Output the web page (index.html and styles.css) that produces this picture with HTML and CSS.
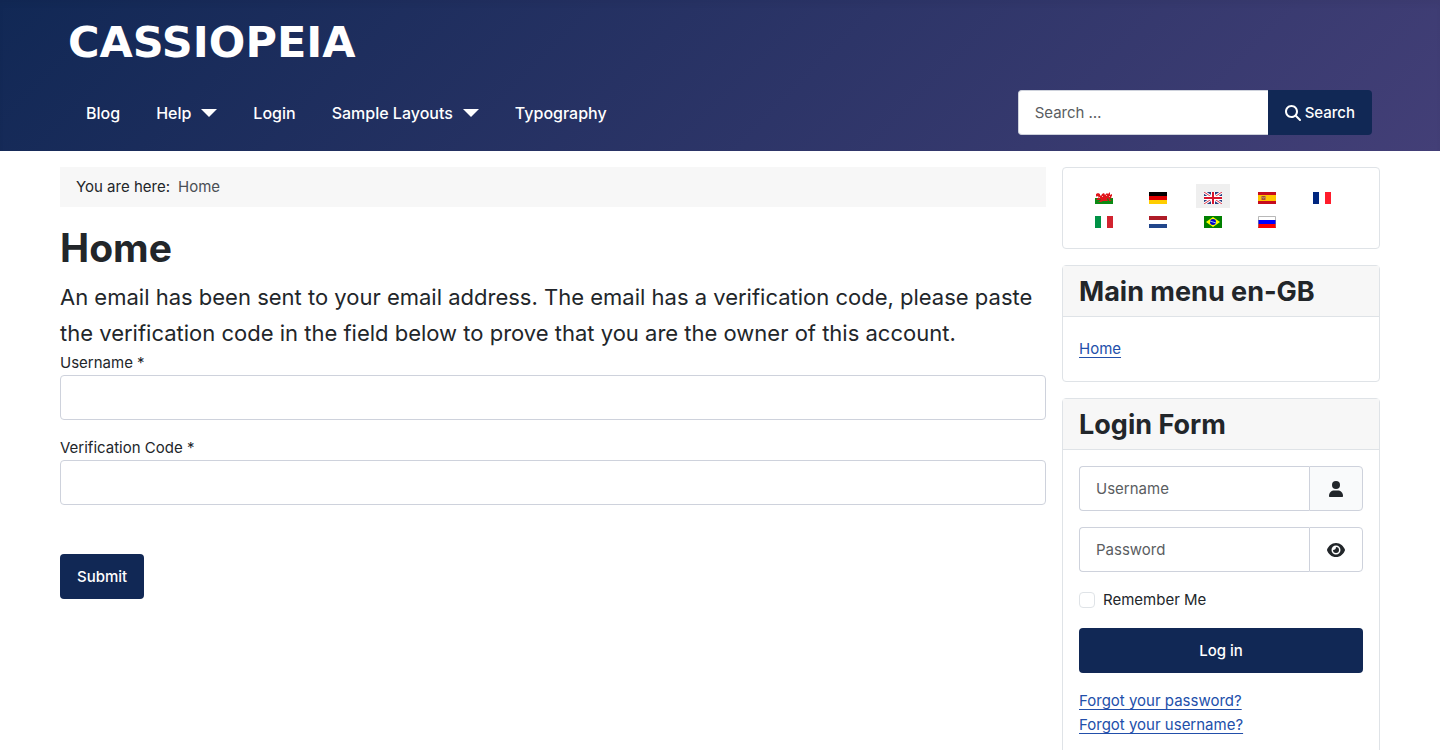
FILE: index.html
```html
<!DOCTYPE html>
<html lang="en-GB">
<head>
<meta charset="utf-8">
<title>Home</title>
<meta name="viewport" content="width=device-width, initial-scale=1">
<link rel="stylesheet" href="styles.css">
</head>
<body>
<header class="header">
  <div class="header-inner">
    <a class="brand" href="#">CASSIOPEIA</a>
    <div class="header-row">
      <nav class="nav" aria-label="Site">
        <a class="nav-link" href="#">Blog</a>
        <a class="nav-link" href="#">Help <svg class="caret" viewBox="0 0 16 8" aria-hidden="true"><path d="M0 0h16L8 8z"/></svg></a>
        <a class="nav-link" href="#">Login</a>
        <a class="nav-link" href="#">Sample Layouts <svg class="caret" viewBox="0 0 16 8" aria-hidden="true"><path d="M0 0h16L8 8z"/></svg></a>
        <a class="nav-link" href="#">Typography</a>
      </nav>
      <form class="search" role="search">
        <input class="input search-input" type="search" placeholder="Search …" aria-label="Search">
        <button class="btn search-btn" type="submit"><svg class="icon" viewBox="0 0 512 512" aria-hidden="true"><path d="M416 208c0 45.900-14.900 88.300-40 122.700l126.600 126.700c12.500 12.500 12.500 32.800 0 45.300s-32.800 12.500-45.300 0L330.700 376c-34.400 25.200-76.800 40-122.700 40C93.100 416 0 322.900 0 208S93.100 0 208 0s208 93.100 208 208zM208 352a144 144 0 1 0 0-288 144 144 0 1 0 0 288z"/></svg>Search</button>
      </form>
    </div>
  </div>
</header>

<div class="page">
  <main class="content">
    <nav class="breadcrumb" aria-label="Breadcrumbs"><span>You are here:</span><span class="crumb">Home</span></nav>
    <h1 class="title">Home</h1>
    <form class="verify">
      <p class="intro">An email has been sent to your email address. The email has a verification code, please paste the verification code in the field below to prove that you are the owner of this account.</p>
      <div class="field">
        <label for="user">Username *</label>
        <input class="input" id="user" type="text">
      </div>
      <div class="field">
        <label for="code">Verification Code *</label>
        <input class="input" id="code" type="text">
      </div>
      <button class="btn submit" type="submit">Submit</button>
    </form>
  </main>

  <aside class="sidebar">
    <section class="card">
      <ul class="flags">
        <li><a class="flag" href="#" aria-label="Cymraeg"><svg viewBox="0 0 18 12"><path fill="#fff" d="M0 0h18v6H0z"/><path fill="#0b8a13" d="M0 6h18v6H0z"/><path fill="#e0151b" d="M1 2l2-1 2 1v1l1 1 1-2 2-1 1 2 2-2 1 1 2-2v3l2-1v2l-1 1 1 2-2-1v2l2 1h-3l-1-3-1 1 1 2H9L8 9l-2 1H3l2-1 1-2-2 1H1l2-2 1-1-2-1-1 1z"/><path fill="#f7b5b5" d="M7 4h1v1H7zM11 3h1v1h-1zM14 4h1v1h-1zM4 5h1v1H4z"/></svg></a></li>
        <li><a class="flag" href="#" aria-label="Deutsch"><svg viewBox="0 0 18 12"><path d="M0 0h18v4H0z"/><path fill="#d00" d="M0 4h18v4H0z"/><path fill="#ffce00" d="M0 8h18v4H0z"/></svg></a></li>
        <li><a class="flag active" href="#" aria-label="English"><svg viewBox="0 0 18 12"><path fill="#243f83" d="M0 0h18v12H0z"/><path stroke="#fff" stroke-width="3" d="M0 0l18 12M18 0L0 12"/><path stroke="#dc3348" d="M0 0l18 12M18 0L0 12"/><path fill="#fff" d="M7 0h4v12H7zM0 4h18v4H0z"/><path fill="#d8142c" d="M8 0h2v12H8zM0 5h18v2H0z"/></svg></a></li>
        <li><a class="flag" href="#" aria-label="Español"><svg viewBox="0 0 18 12"><path fill="#c60b1e" d="M0 0h18v12H0z"/><path fill="#ffc400" d="M0 3h18v6H0z"/><path fill="#c58a3c" d="M3 4h5v4H3z"/><path fill="#b0502a" d="M4 4h3v1H4zM4 6h3v2H4z"/><path fill="#8e7b7b" d="M5 5h1v2H5z"/></svg></a></li>
        <li><a class="flag" href="#" aria-label="Français"><svg viewBox="0 0 18 12"><path fill="#00267f" d="M0 0h6v12H0z"/><path fill="#fff" d="M6 0h6v12H6z"/><path fill="#ff1c2b" d="M12 0h6v12h-6z"/></svg></a></li>
        <li><a class="flag" href="#" aria-label="Italiano"><svg viewBox="0 0 18 12"><path fill="#009246" d="M0 0h6v12H0z"/><path fill="#fff" d="M6 0h6v12H6z"/><path fill="#d2232f" d="M12 0h6v12h-6z"/></svg></a></li>
        <li><a class="flag" href="#" aria-label="Nederlands"><svg viewBox="0 0 18 12"><path fill="#ae1c28" d="M0 0h18v4H0z"/><path fill="#fff" d="M0 4h18v4H0z"/><path fill="#21468b" d="M0 8h18v4H0z"/></svg></a></li>
        <li><a class="flag" href="#" aria-label="Português"><svg viewBox="0 0 18 12"><path fill="#008000" d="M0 0h18v12H0z"/><path fill="#ff0" d="M9 1l7 5-7 5-7-5z"/><circle cx="9" cy="6" r="3" fill="#0000d0"/><path stroke="#8fb8f0" d="M6 5l6 2"/></svg></a></li>
        <li><a class="flag" href="#" aria-label="Русский"><svg viewBox="0 0 18 12"><path fill="#fff" d="M0 0h18v4H0z"/><path fill="#00f" d="M0 4h18v4H0z"/><path fill="#f00" d="M0 8h18v4H0z"/><path fill="none" stroke="#888" stroke-opacity=".6" d="M.5 11.500V.5h17v11"/></svg></a></li>
      </ul>
    </section>

    <section class="card">
      <h3 class="card-header">Main menu en-GB</h3>
      <ul class="menu"><li><a class="link" href="#">Home</a></li></ul>
    </section>

    <section class="card">
      <h3 class="card-header">Login Form</h3>
      <form class="login">
        <div class="group">
          <input class="input" type="text" placeholder="Username" aria-label="Username">
          <span class="addon addon-tint"><svg class="icon" viewBox="0 0 16 16" aria-hidden="true"><circle cx="8" cy="4" r="4"/><path d="M1 15c0-3.500 2.300-5.500 5.500-5.500h3c3.200 0 5.500 2 5.500 5.500 0 .6-.4 1-1 1H2c-.6 0-1-.4-1-1z"/></svg></span>
        </div>
        <div class="group">
          <input class="input" type="password" placeholder="Password" aria-label="Password">
          <button class="addon" type="button" aria-label="Show password"><svg class="icon icon-eye" viewBox="0 0 18 16" aria-hidden="true"><path fill-rule="evenodd" d="M9 1C4.500 1 1.400 4.200.1 7.600a1 1 0 0 0 0 .8C1.400 11.800 4.500 15 9 15s7.600-3.200 8.900-6.600a1 1 0 0 0 0-.8C16.600 4.200 13.500 1 9 1zm0 2.500a4.500 4.500 0 1 1 0 9 4.500 4.500 0 0 1 0-9z"/><path d="M9 5c0 1.900-1.100 3-3 3a3 3 0 1 0 3-3z"/></svg></button>
        </div>
        <label class="remember"><input class="check" type="checkbox">Remember Me</label>
        <button class="btn" type="submit">Log in</button>
        <ul class="links">
          <li><a class="link" href="#">Forgot your password?</a></li>
          <li><a class="link" href="#">Forgot your username?</a></li>
        </ul>
      </form>
    </section>
  </aside>
</div>
</body>
</html>
```
FILE: styles.css
```css
*, *::before, *::after { box-sizing: border-box; }
body {
  margin: 0;
  background: #fff;
  color: #22262a;
  font-family: Inter, "Liberation Sans", sans-serif;
  font-size: 15px;
  line-height: 24px;
}
h1, h3, p, ul { margin: 0; padding: 0; }
ul { list-style: none; }
input, button { font: inherit; color: inherit; }

.header {
  background-image: linear-gradient(135deg, #112855 0%, #433f77 100%);
  box-shadow: inset 0 5px 5px rgba(0, 0, 0, .03);
  color: #fff;
}
.header-inner {
  max-width: 1320px;
  margin: 0 auto;
  padding: 16px 8px;
}
.brand {
  display: block;
  color: #fff;
  font-family: "DejaVu Sans", sans-serif;
  font-size: 43px;
  font-weight: 700;
  line-height: 52px;
  text-decoration: none;
}
.header-row {
  display: flex;
  justify-content: space-between;
  align-items: center;
  margin-top: 22px;
}
.nav { display: flex; gap: 36px; padding-left: 18px; }
.nav-link {
  display: flex;
  align-items: center;
  gap: 10px;
  color: #fff;
  font-size: 16px;
  font-weight: 500;
  text-decoration: none;
}
.caret { width: 16px; height: 8px; fill: currentColor; }
.search { display: flex; }

.input {
  display: block;
  width: 100%;
  min-width: 0;
  padding: 10px 16px 9px;
  border: 1px solid #ced2dc;
  border-radius: 4px;
  background: #fff;
  color: #22262a;
  line-height: 24px;
}
.input::placeholder { color: #5a5d61; opacity: 1; }
.btn {
  height: 45px;
  padding: 0 17px;
  border: 0;
  border-radius: 4px;
  background: #112855;
  color: #fff;
  font-weight: 500;
}
.icon { width: 16px; height: 16px; fill: currentColor; }
.search-input { width: 250px; border-right: 0; border-radius: 4px 0 0 4px; }
.search-btn { display: flex; align-items: center; gap: 4px; border-radius: 0 4px 4px 0; }

.page {
  display: grid;
  grid-template-columns: minmax(0, 1fr) 318px;
  gap: 16px;
  max-width: 1320px;
  margin: 0 auto;
  padding: 16px 0;
}
.breadcrumb {
  display: flex;
  gap: 8px;
  padding: 8px 16px;
  background: #f7f7f7;
}
.crumb { color: #4a4f55; }
.title {
  margin-top: 16px;
  font-size: 39px;
  font-weight: 700;
  line-height: 50px;
}
.intro { margin-top: 6px; font-size: 22px; line-height: 36px; }
.field { margin-bottom: 16px; }
.field label { display: block; }
.submit { margin-top: 33px; }

.sidebar { display: flex; flex-direction: column; gap: 16px; }
.card { border: 1px solid #dfe3e7; border-radius: 4px; }
.card-header {
  padding: 9px 16px 7px;
  border-bottom: 1px solid #dfe3e7;
  background: #f7f7f7;
  font-size: 27px;
  font-weight: 700;
  line-height: 34px;
}
.flags {
  display: grid;
  grid-template-columns: repeat(5, 1fr);
  padding: 16px 20px 16px 24px;
}
.flag {
  display: flex;
  align-items: center;
  justify-content: center;
  width: 34px;
  height: 24px;
  padding-top: 4px;
}
.flag svg { width: 18px; height: 12px; }
.flag.active { background: #efefef; }
.menu { padding: 20px 16px; }
.link { color: #224faa; text-underline-offset: 3px; }

.login { display: grid; gap: 16px; padding: 16px; }
.group { display: flex; }
.group .input { flex: 1; border-right: 0; border-radius: 4px 0 0 4px; }
.addon {
  display: flex;
  align-items: center;
  justify-content: center;
  width: 54px;
  padding: 0;
  border: 1px solid #ced2dc;
  border-radius: 0 4px 4px 0;
  background: #fff;
}
.addon-tint { background: #f9fafb; }
.icon-eye { width: 18px; }
.remember { display: flex; align-items: center; gap: 8px; }
.check {
  appearance: none;
  width: 16px;
  height: 16px;
  margin: 0;
  border: 1px solid #dfe3e7;
  border-radius: 4px;
  background: #fff;
}
.check:checked { background: #112855; }
```
